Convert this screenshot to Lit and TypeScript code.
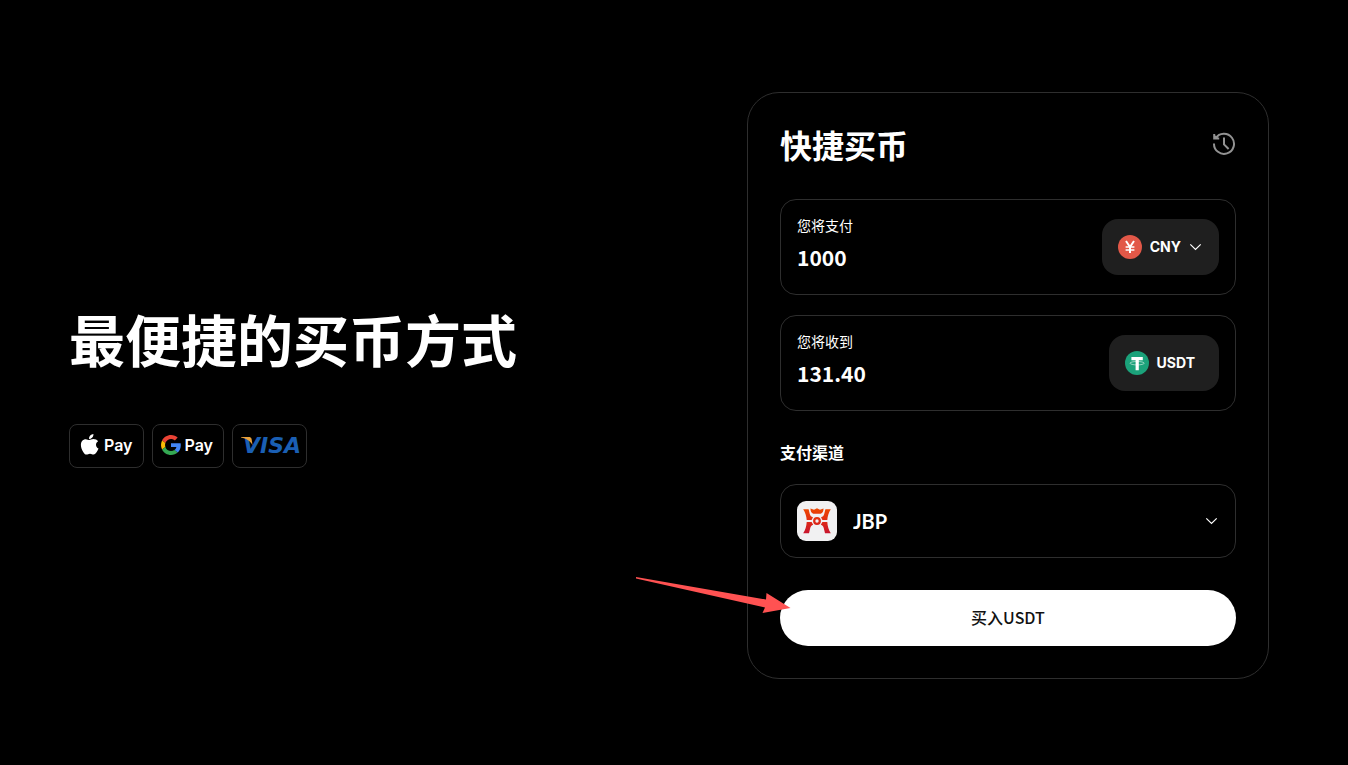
import { LitElement, html, css } from "lit";
import { customElement, state } from "lit/decorators.js";

const chevron = html`<svg class="chevron" viewBox="0 0 16 16" aria-hidden="true">
  <path d="M3.300 5.400 8.500 10.500 13.700 5.400" fill="none" stroke="#fff" stroke-width="1.200" />
</svg>`;

const historyIcon = html`<svg viewBox="0 0 24 24" width="24" height="24" aria-hidden="true">
  <g fill="none" stroke="#929292" stroke-width="2">
    <path d="M3.600 6.400A10 10 0 1 1 2 11.500" />
    <path d="M2.200 2v4.600h5" />
    <path d="M12 5.400v7l4.600 4.600" />
  </g>
  <path d="M2 2.500 7 6.500H2z" fill="#929292" />
</svg>`;

const yuanIcon = html`<svg class="coin" viewBox="0 0 24 24" aria-hidden="true">
  <circle cx="12" cy="12" r="12" fill="#e25848" />
  <g fill="none" stroke="#fff" stroke-width="2">
    <path d="M8 6 12 12 16 6M12 11.500V18" />
    <path d="M7.600 12h8.800M7.600 15h8.800" stroke-width="1.300" />
  </g>
</svg>`;

const tetherIcon = html`<svg class="coin" viewBox="0 0 24 24" aria-hidden="true">
  <circle cx="12" cy="12" r="12" fill="#1ba27a" />
  <ellipse cx="12.100" cy="12.200" rx="7.100" ry="1.700" fill="none" stroke="#fff" stroke-width=".8" opacity=".65" />
  <path d="M6.400 6.100h11.400v3.100h-4v10h-3.200v-10H6.400z" fill="#fff" />
</svg>`;

const jbpLogo = html`<svg class="logo" viewBox="0 0 40 40" aria-hidden="true">
  <defs>
    <linearGradient id="ember" x1="0" y1="7" x2="0" y2="33" gradientUnits="userSpaceOnUse">
      <stop offset="0" stop-color="#ee4a00" />
      <stop offset=".5" stop-color="#e02a14" />
      <stop offset="1" stop-color="#c61430" />
    </linearGradient>
  </defs>
  <rect width="40" height="40" rx="9" fill="#f1f1f2" />
  <g fill="url(#ember)">
    <path d="M6.200 8.200H11.600l1.200 4.800c.5 1.800 1.500 2.900 3.200 3.300L14.600 19H9.700C9.500 15.200 8.300 11.400 6.200 8.200z" />
    <path d="M33.800 8.200H28.400l-1.200 4.800c-.5 1.800-1.500 2.900-3.200 3.300l1.400 2.700h4.900c.2-3.800 1.400-7.600 3.500-10.800z" />
    <path d="M9.700 21h4.900l1.600 2.800c-1.700.5-2.600 1.600-3 3.400l-1.200 5H6.200c2.100-3.200 3.300-7.200 3.500-11.200z" />
    <path d="M30.300 21h-4.900l-1.600 2.800c1.700.5 2.600 1.600 3 3.400l1.200 5h5.800c-2.100-3.200-3.300-7.200-3.500-11.200z" />
    <path d="M13.500 7.500 17 8.800l3-1.600 3 1.600 3.500-1.300c.2 2.600-1 4.700-2.800 5.200h-7.400c-1.800-.5-3-2.600-2.800-5.200z" />
    <path fill-rule="evenodd" d="M20 16.100a3.900 3.900 0 1 1 0 7.800 3.900 3.900 0 0 1 0-7.800zm0 2.200a1.700 1.700 0 1 0 0 3.400 1.700 1.700 0 0 0 0-3.400z" />
  </g>
</svg>`;

const appleMark = html`<svg viewBox="0 0 18 21" width="19" height="21" aria-hidden="true">
  <path fill="#fff" d="M12.900 0c.2 1.300-.3 2.500-1.100 3.400-.8.900-2 1.600-3.200 1.500-.2-1.200.4-2.500 1.100-3.300C10.500.7 11.900.1 12.900 0zM17.600 7.200c-1.300.8-2.100 2-2.100 3.500 0 1.800 1 3.200 2.500 3.800-.4 1.300-1 2.500-1.800 3.600-1 1.400-1.800 2.500-3.200 2.500-1.300 0-1.800-.8-3.500-.8-1.600 0-2.200.8-3.500.8-1.400 0-2.300-1.200-3.300-2.700C1.300 15.700.4 13.200.4 10.900c0-3.600 2.300-5.700 4.800-5.700 1.500 0 2.700.9 3.600.9.900 0 2.300-1 4.100-1 1.900 0 3.600.8 4.700 2.100z" />
</svg>`;

const googleMark = html`<svg viewBox="0 0 48 48" width="20" height="20" aria-hidden="true">
  <path fill="#ea4335" d="M24 9.500c3.540 0 6.710 1.220 9.210 3.600l6.850-6.850C35.900 2.380 30.470 0 24 0 14.620 0 6.510 5.380 2.560 13.220l7.980 6.190C12.430 13.720 17.740 9.500 24 9.500z" />
  <path fill="#4285f4" d="M47.500 24.550c0-1.570-.15-3.090-.38-4.550H24v9.020h12.940c-.58 2.960-2.260 5.480-4.780 7.180l7.730 6c4.510-4.180 7.610-10.360 7.610-17.650z" />
  <path fill="#fbbc05" d="M10.530 28.590c-.48-1.450-.76-2.990-.76-4.590s.27-3.140.76-4.590l-7.980-6.190C.92 16.460 0 20.120 0 24c0 3.880.92 7.540 2.560 10.780l7.970-6.190z" />
  <path fill="#34a853" d="M24 48c6.480 0 11.930-2.130 15.890-5.810l-7.730-6c-2.150 1.450-4.920 2.300-8.160 2.300-6.260 0-11.570-4.220-13.470-9.910l-7.980 6.190C6.510 42.620 14.620 48 24 48z" />
</svg>`;

@customElement("app-root")
export class AppRoot extends LitElement {
  @state() private pay = "1000";

  static styles = css`
    :host {
      display: block;
      color: #fff;
      background: #000;
      font-family: "Noto Sans CJK SC", "Noto Sans", sans-serif;
      font-size: 16px;
    }
    * { box-sizing: border-box; }
    svg { display: block; flex: none; }
    button, input, select { font: inherit; color: inherit; margin: 0; border: 0; background: none; }
    h1, h2 { margin: 0; font-weight: 700; }
    .page {
      min-height: 100vh;
      display: flex;
      align-items: center;
      justify-content: space-between;
      gap: 48px;
      padding: 6px 79px 0 69px;
    }
    .headline { font-size: 56px; line-height: 68px; margin-bottom: 52px; }
    .methods { display: flex; gap: 8px; margin: 0; padding: 0; list-style: none; }
    .method {
      display: flex;
      align-items: center;
      height: 44px;
      padding: 0 10px 2px;
      border: 1px solid #2e2e2e;
      border-radius: 8px;
      font: 600 16px/24px Inter, sans-serif;
    }
    .apple { gap: 5px; }
    .google { gap: 4px; padding-left: 8px; }
    .visa {
      position: relative;
      padding: 0 5px 0 10px;
      font: italic 700 22px/24px "DejaVu Sans", sans-serif;
      color: #1a5fb4;
    }
    .visa-flick { position: absolute; left: 8px; top: 12px; }
    .card {
      flex: 0 1 522px;
      padding: 32px;
      border: 1px solid #2e2e2e;
      border-radius: 32px;
    }
    .card-head { display: flex; justify-content: space-between; margin-bottom: 36px; }
    .card-title { font-size: 32px; line-height: 38px; }
    .history { height: 38px; padding: 0; cursor: pointer; }
    .field {
      display: flex;
      align-items: center;
      min-height: 96px;
      padding: 0 16px;
      border: 1px solid #2e2e2e;
      border-radius: 16px;
    }
    .field + .field { margin-top: 20px; }
    .entry { flex: 1; min-width: 0; align-self: flex-start; padding-top: 13px; }
    .caption { display: block; font-size: 14px; line-height: 24px; margin-bottom: 6px; }
    .amount {
      display: block;
      width: 100%;
      height: 28px;
      padding: 0;
      outline: none;
      font-weight: 700;
      font-size: 21px;
      line-height: 28px;
    }
    .chip {
      display: grid;
      align-items: center;
      height: 56px;
      border-radius: 16px;
      background: #1f1f1f;
      font: 700 14px/20px Inter, sans-serif;
    }
    .chip > *, .channel > * { grid-area: 1 / 1; }
    .coin { width: 24px; height: 24px; margin-left: 16px; pointer-events: none; }
    .chevron { width: 16px; height: 16px; margin-right: 16px; justify-self: end; pointer-events: none; }
    .select { appearance: none; field-sizing: content; outline: none; cursor: pointer; }
    .currency { height: 56px; padding: 0 38px 0 48px; }
    .asset { padding: 0 24px 0 48px; }
    .channel-label { display: block; margin: 31px 0 21px; font-weight: 700; line-height: 21px; }
    .channel {
      display: grid;
      align-items: center;
      height: 74px;
      border: 1px solid #2e2e2e;
      border-radius: 16px;
    }
    .channel-select {
      width: 100%;
      height: 72px;
      padding: 0 48px 0 72px;
      font: 700 20px/28px Lato, sans-serif;
    }
    .logo { width: 40px; height: 40px; margin-left: 16px; pointer-events: none; }
    .action { position: relative; margin-top: 32px; }
    .buy {
      display: block;
      width: 100%;
      height: 56px;
      padding: 0 0 2px;
      border-radius: 28px;
      background: #fff;
      color: #121212;
      font-weight: 500;
      cursor: pointer;
    }
    .pointer { position: absolute; left: -145px; top: -14px; pointer-events: none; }
    option { color: #000; }
  `;

  render() {
    return html`
      <main class="page">
        <section>
          <h1 class="headline">最便捷的买币方式</h1>
          <ul class="methods">
            <li class="method apple">${appleMark}<span>Pay</span></li>
            <li class="method google">${googleMark}<span>Pay</span></li>
            <li class="method visa">
              <span>VISA</span>
              <svg class="visa-flick" viewBox="0 0 12 9" width="12" height="9" aria-hidden="true">
                <path d="M0 0h7.500c1.800 0 2.700.6 3.100 2L11.600 8.500C9.500 4.200 5.500 1.400 0 .6z" fill="#e9a23b" />
              </svg>
            </li>
          </ul>
        </section>

        <form class="card" @submit=${(e: Event) => e.preventDefault()}>
          <header class="card-head">
            <h2 class="card-title">快捷买币</h2>
            <button class="history" type="button" aria-label="历史记录">${historyIcon}</button>
          </header>

          <div class="field">
            <div class="entry">
              <label class="caption" for="pay">您将支付</label>
              <input class="amount" id="pay" inputmode="decimal" .value=${this.pay}
                @input=${(e: Event) => (this.pay = (e.target as HTMLInputElement).value)} />
            </div>
            <div class="chip">
              <select class="select currency" aria-label="货币"><option>CNY</option></select>
              ${yuanIcon}${chevron}
            </div>
          </div>

          <div class="field">
            <div class="entry">
              <label class="caption" for="receive">您将收到</label>
              <input class="amount" id="receive" readonly .value=${(Number(this.pay) * 0.1314).toFixed(2)} />
            </div>
            <div class="chip">${tetherIcon}<span class="asset">USDT</span></div>
          </div>

          <label class="channel-label" for="channel">支付渠道</label>
          <div class="channel">
            <select class="select channel-select" id="channel"><option>JBP</option></select>
            ${jbpLogo}${chevron}
          </div>

          <div class="action">
            <button class="buy" type="submit">买入USDT</button>
            <svg class="pointer" viewBox="0 0 158 40" width="158" height="40" aria-hidden="true">
              <path d="M1 1 131 23.500 131.500 17 155.500 32 127.500 37 130 31.500 1 2.500z" fill="#ff5252" />
            </svg>
          </div>
        </form>
      </main>
    `;
  }
}
